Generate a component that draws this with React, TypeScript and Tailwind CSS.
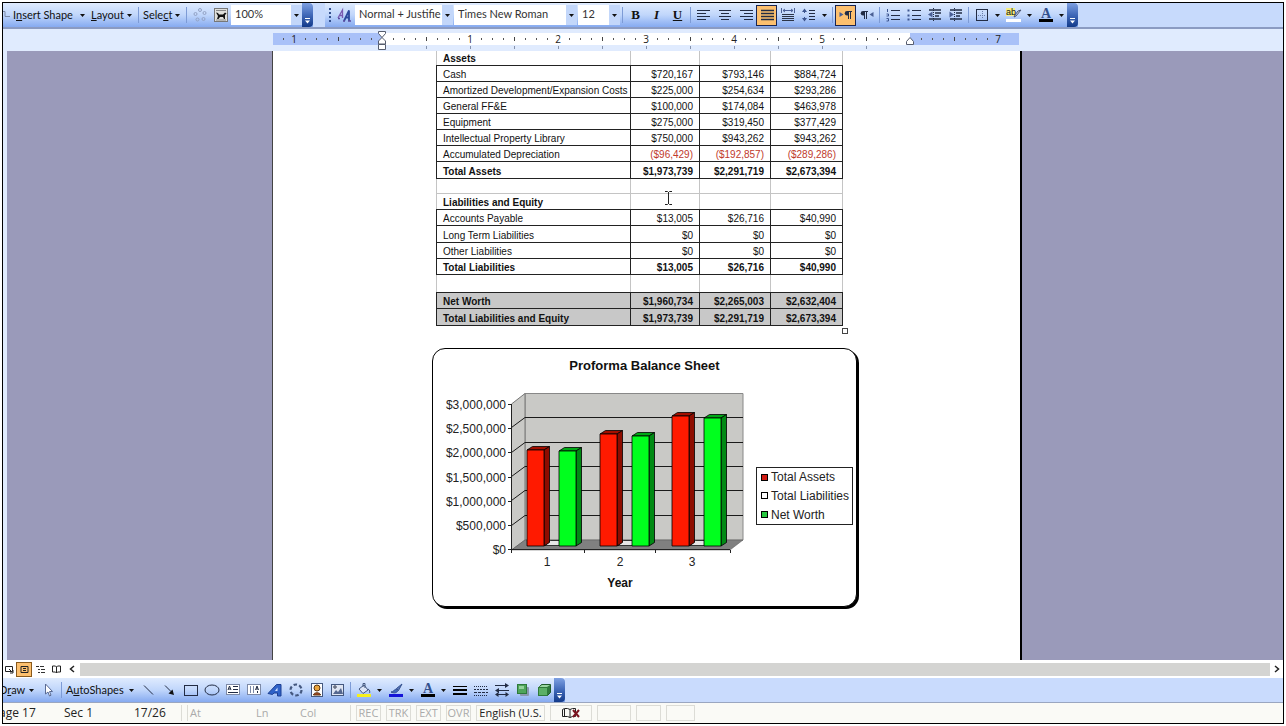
import { useState } from "react";
import type { ReactNode } from "react";

type Row = {
  label: string;
  values?: string[];
  kind?: "bold" | "open" | "shaded" | "negative";
  height: string;
};

const ROWS: Row[] = [
  { label: "Assets", kind: "open", height: "h-[14px]" },
  { label: "Cash", values: ["$720,167", "$793,146", "$884,724"], height: "h-[16px]" },
  { label: "Amortized Development/Expansion Costs", values: ["$225,000", "$254,634", "$293,286"], height: "h-[16px]" },
  { label: "General FF&E", values: ["$100,000", "$174,084", "$463,978"], height: "h-[16px]" },
  { label: "Equipment", values: ["$275,000", "$319,450", "$377,429"], height: "h-[16px]" },
  { label: "Intellectual Property Library", values: ["$750,000", "$943,262", "$943,262"], height: "h-[16px]" },
  { label: "Accumulated Depreciation", values: ["($96,429)", "($192,857)", "($289,286)"], kind: "negative", height: "h-[16px]" },
  { label: "Total Assets", values: ["$1,973,739", "$2,291,719", "$2,673,394"], kind: "bold", height: "h-[17px]" },
  { label: "", kind: "open", height: "h-[15px]" },
  { label: "Liabilities and Equity", kind: "open", height: "h-[16px]" },
  { label: "Accounts Payable", values: ["$13,005", "$26,716", "$40,990"], height: "h-[16px]" },
  { label: "Long Term Liabilities", values: ["$0", "$0", "$0"], height: "h-[17px]" },
  { label: "Other Liabilities", values: ["$0", "$0", "$0"], height: "h-[16px]" },
  { label: "Total Liabilities", values: ["$13,005", "$26,716", "$40,990"], kind: "bold", height: "h-[16px]" },
  { label: "", kind: "open", height: "h-[18px]" },
  { label: "Net Worth", values: ["$1,960,734", "$2,265,003", "$2,632,404"], kind: "shaded", height: "h-[16px]" },
  { label: "Total Liabilities and Equity", values: ["$1,973,739", "$2,291,719", "$2,673,394"], kind: "shaded", height: "h-[17px]" },
];

const YEARS = [
  { year: "1", assets: 1973739, netWorth: 1960734 },
  { year: "2", assets: 2291719, netWorth: 2265003 },
  { year: "3", assets: 2673394, netWorth: 2632404 },
];

const AXIS_LABELS = ["$3,000,000", "$2,500,000", "$2,000,000", "$1,500,000", "$1,000,000", "$500,000", "$0"];

const Icon = ({ children }: { children: ReactNode }) => (
  <svg width="16" height="16" viewBox="0 0 16 16" fill="none" stroke="#222c44" className="shrink-0">
    {children}
  </svg>
);

const IconButton = ({ label, active, children }: { label: string; active?: boolean; children: ReactNode }) => (
  <button
    type="button"
    aria-label={label}
    aria-pressed={active}
    className={`flex h-[21px] w-[21px] shrink-0 items-center justify-center ${
      active ? "border border-[#1a2550] bg-[#fdc06e]" : ""
    }`}
  >
    <Icon>{children}</Icon>
  </button>
);

const Triangle = () => (
  <svg width="5" height="3" viewBox="0 0 5 3" className="shrink-0">
    <path d="M0 0h5L2.5 3z" fill="#111" />
  </svg>
);

const ArrowButton = ({ label }: { label: string }) => (
  <button type="button" aria-label={label} className="flex h-[21px] w-[11px] shrink-0 items-center justify-center">
    <Triangle />
  </button>
);

const TextMenu = ({ width, children }: { width: string; children: ReactNode }) => (
  <button
    type="button"
    className={`flex h-[21px] shrink-0 items-center justify-between pr-1 pl-0.5 text-[11px] whitespace-nowrap ${width}`}
  >
    <span>{children}</span>
    <Triangle />
  </button>
);

const Separator = () => <div className="mx-0.5 h-4 w-px shrink-0 bg-[#7d9bd6]" />;

const EndCap = ({ label }: { label: string }) => (
  <button
    type="button"
    aria-label={label}
    className="flex h-full w-[11px] shrink-0 items-end justify-center rounded-r-sm bg-gradient-to-b from-[#7ea0e2] via-[#4068b8] to-[#123a8a] pb-0.5"
  >
    <svg width="7" height="7" viewBox="0 0 7 7">
      <path d="M1 .5h5" stroke="#fff" />
      <path d="M1 2.500h5L3.500 5.500z" fill="#fff" />
    </svg>
  </button>
);

const Combo = ({
  label,
  options,
  width,
}: {
  label: string;
  options: string[];
  width: string;
}) => {
  const [value, setValue] = useState(options[0]);
  return (
    <label className={`relative flex h-[20px] shrink-0 bg-white ${width}`}>
      <select
        aria-label={label}
        value={value}
        onChange={(e) => setValue(e.target.value)}
        className="w-full appearance-none overflow-hidden pr-3 pb-0.5 pl-1 text-[11px] text-[#333] outline-none"
      >
        {options.map((o) => (
          <option key={o}>{o}</option>
        ))}
      </select>
      <span className="pointer-events-none absolute inset-y-0 right-0 flex w-[11px] items-center justify-center bg-[#c3d7fa]">
        <Triangle />
      </span>
    </label>
  );
};

const TOOLBAR =
  "flex h-[24px] shrink-0 items-center bg-gradient-to-b from-[#dfebfe] via-[#c0d6fb] to-[#86aaf0]";

const TopToolbars = () => (
  <header className="flex shrink-0 gap-3 overflow-hidden border-b-2 border-[#8b9bc2] bg-[#c7dafc]">
    <div className={TOOLBAR}>
      <svg width="8" height="16" viewBox="0 0 8 16" fill="none" stroke="#7c8aa8" className="shrink-0">
        <path d="M0 4.500h2v5h5" />
      </svg>
      <TextMenu width="w-[78px]">
        I<u>n</u>sert Shape
      </TextMenu>
      <TextMenu width="w-[47px]">
        <u>L</u>ayout
      </TextMenu>
      <Separator />
      <TextMenu width="w-[43px]">
        Sele<u>c</u>t
      </TextMenu>
      <Separator />
      <IconButton label="AutoFormat">
        <g stroke="#93a2c4">
          <circle cx="8" cy="3" r="1.500" />
          <circle cx="12.500" cy="6" r="1.500" />
          <circle cx="11.500" cy="12" r="1.500" />
          <circle cx="5.500" cy="12.500" r="1.500" />
          <circle cx="3.500" cy="7" r="1.500" />
        </g>
      </IconButton>
      <IconButton label="Text Wrapping">
        <rect x="1.500" y="1.500" width="13" height="13" fill="#e0e0dc" stroke="#777" />
        <path d="M3 3.500h10M3 13h10" stroke="#888" />
        <path d="M3 5.500l2 .5 1 1.500h4l2-2 1.500 1L12 8v4h-1l-1-2H7l-1.500 2H4l1-3z" fill="#111" stroke="none" />
      </IconButton>
      <Combo label="Zoom" options={["100%", "75%", "150%"]} width="w-[71px]" />
      <EndCap label="Toolbar Options" />
    </div>

    <div className={TOOLBAR}>
      <svg width="9" height="16" viewBox="0 0 9 16" className="shrink-0">
        <path d="M4 1h2v2H4zM4 5h2v2H4zM4 9h2v2H4zM4 13h2v2H4z" fill="#33508e" />
      </svg>
      <IconButton label="Styles and Formatting">
        <g strokeWidth="1.300">
          <path d="M1 11L5.500 3v8M2.500 8.500h3" stroke="#7a5ab0" />
          <path d="M7 14l5-10.500V14M8.500 10.500H12" stroke="#2c4a9c" strokeWidth="1.800" />
          <path d="M6 14h2M11 14h3M1 11.500h2" stroke="#5a4ba0" />
        </g>
      </IconButton>
      <div className="flex gap-px">
        <Combo label="Style" options={["Normal + Justifie", "Normal", "Heading 1"]} width="w-[98px]" />
        <Combo label="Font" options={["Times New Roman", "Arial"]} width="w-[123px]" />
        <Combo label="Font Size" options={["12", "10", "14"]} width="w-[42px]" />
      </div>
      <Separator />
      <button type="button" aria-label="Bold" className="w-[21px] font-['Liberation_Serif'] text-[13px] font-black">
        B
      </button>
      <button type="button" aria-label="Italic" className="w-[21px] font-['Liberation_Serif'] text-[13px] font-bold italic">
        I
      </button>
      <button type="button" aria-label="Underline" className="w-[21px] font-['Liberation_Serif'] text-[13px] font-bold underline">
        U
      </button>
      <Separator />
      <IconButton label="Align Left">
        <path d="M1 3.500h13M1 6.500h9M1 9.500h13M1 12.500h9" />
      </IconButton>
      <IconButton label="Center">
        <path d="M2 3.500h12M4 6.500h8M2 9.500h12M4 12.500h8" />
      </IconButton>
      <IconButton label="Align Right">
        <path d="M2 3.500h13M6 6.500h9M2 9.500h13M6 12.500h9" />
      </IconButton>
      <IconButton label="Justify" active>
        <path d="M2 3.500h13M2 6.500h13M2 9.500h13M2 12.500h13" strokeWidth="1.500" />
      </IconButton>
      <IconButton label="Distributed">
        <path d="M1.500 1v5M14.500 1v5M3 3.500h10M5 2L3 3.500 5 5M11 2l2 1.500L11 5" stroke="#4c6096" />
        <path d="M2 7.500h12M2 9.500h12M2 11.500h12M2 13.500h12" stroke="#2c3446" />
      </IconButton>
      <IconButton label="Line Spacing">
        <path d="M3.500 2v4M3.500 10v4" stroke="#3e5690" />
        <path d="M1 5l2.500-3.500L6 5zM1 11l2.500 3.500L6 11z" fill="#3e5690" stroke="none" />
        <path d="M8 3.500h6M8 6.500h6M8 9.500h6M8 12.500h6" />
      </IconButton>
      <ArrowButton label="Line Spacing options" />
      <Separator />
      <IconButton label="Left-to-Right" active>
        <path d="M1.500 5v5l4-2.500z" fill="#4a5f94" stroke="none" />
        <path d="M10.500 4v8M12.500 4v8M9 4.500h5" />
        <path d="M10 4H9a2 2 0 000 4.500h1z" fill="#222c44" stroke="none" />
      </IconButton>
      <IconButton label="Right-to-Left">
        <path d="M14.500 5v5l-4-2.500z" fill="#4a5f94" stroke="none" />
        <path d="M5.500 4v8M7.500 4v8M4 4.500h5" />
        <path d="M5 4H4a2 2 0 000 4.500h1z" fill="#222c44" stroke="none" />
      </IconButton>
      <Separator />
      <IconButton label="Numbering">
        <path d="M2.500 2v3M1.500 7h2v2h-2M1.500 11.500h2v2.500h-2" stroke="#3e5690" />
        <path d="M6 3.500h9M6 8.500h9M6 12.500h9" />
      </IconButton>
      <IconButton label="Bullets">
        <path d="M1.500 2.500h2v2h-2zM1.500 7.500h2v2h-2zM1.500 11.500h2v2h-2z" fill="#3e5690" stroke="none" />
        <path d="M6 3.500h9M6 8.500h9M6 12.500h9" />
      </IconButton>
      <IconButton label="Decrease Indent">
        <path d="M6.500 1v14" strokeDasharray="1 1" />
        <path d="M5.500 4.500L1 7.500l4.500 3z" fill="#4a5f94" stroke="none" />
        <path d="M2 3h12M8 6h6M8 9h4M2 12h12" strokeWidth="1.500" />
      </IconButton>
      <IconButton label="Increase Indent">
        <path d="M6.500 1v14" strokeDasharray="1 1" />
        <path d="M1.500 4.500L6 7.500l-4.500 3z" fill="#4a5f94" stroke="none" />
        <path d="M2 3h12M8 6h6M8 9h4M2 12h12" strokeWidth="1.500" />
      </IconButton>
      <Separator />
      <IconButton label="Outside Border">
        <rect x="2.500" y="2.500" width="11" height="11" />
        <path d="M8.500 4v8M4 8.500h8" strokeDasharray="1 1" stroke="#6a7daa" />
      </IconButton>
      <ArrowButton label="Border options" />
      <IconButton label="Highlight">
        <rect x="0" y="1" width="9" height="8" fill="#f5ef84" stroke="none" />
        <text x="0" y="8" fontSize="9" fontFamily="Liberation Sans" fill="#111" stroke="none">
          ab
        </text>
        <path d="M15 3l-5 6-2 1 1-2 3-4z" fill="#cdd6ea" stroke="#4a5470" />
        <rect x="0" y="12" width="15" height="3" fill="#fff" stroke="none" />
      </IconButton>
      <ArrowButton label="Highlight options" />
      <IconButton label="Font Color">
        <text x="3" y="11" fontSize="14" fontFamily="Liberation Serif" fontWeight="bold" fill="#33508e" stroke="none">
          A
        </text>
        <rect x="1" y="12" width="14" height="3" fill="#000" stroke="none" />
      </IconButton>
      <ArrowButton label="Font Color options" />
      <EndCap label="Formatting Options" />
    </div>
  </header>
);

// 88px to the inch, a tick every eighth; the left margin stands at 110
const ZERO = 110;

const Ruler = () => {
  const ticks = Array.from({ length: 67 }, (_, i) => i - 9);
  return (
    <div className="flex h-[22px] shrink-0 justify-center overflow-hidden bg-[#e0ebfe] pl-2">
      <svg width="750" height="22" viewBox="0 0 750 22" className="shrink-0">
        <rect x="1" y="4" width="746" height="12" fill="#a9c1f8" />
        <rect x={ZERO} y="4" width="528" height="12" fill="#fff" />
        {ticks.map((t) => {
          const x = ZERO + t * 11;
          if (t % 8 === 0) {
            const inch = Math.abs(t / 8);
            if (inch === 0 || inch === 6) return null;
            return (
              <text key={t} x={x} y="14" textAnchor="middle" fontSize="10" fontFamily="Open Sans" fill="#222">
                {inch}
              </text>
            );
          }
          if (x > 735) return null;
          return t % 4 === 0 ? (
            <rect key={t} x={x} y="8" width="1" height="4" fill="#444" />
          ) : (
            <rect key={t} x={x} y="9" width="1" height="2" fill="#555" />
          );
        })}
        {Array.from({ length: 11 }, (_, i) => (
          <rect key={i} x={ZERO + 44 * (i + 1)} y="17" width="1" height="3" fill="#8592ac" />
        ))}
        <g fill="#fff" stroke="#555c6e">
          <path d="M106.500 2.500h7v2l-3.500 4-3.500-4zM110 8.500l3.500 3.500v3h-7v-3zM106.500 15.500h7v5h-7z" />
          <path d="M638 8.500l3.500 4v3h-7v-3z" />
        </g>
      </svg>
    </div>
  );
};

const BalanceTable = () => (
  <table aria-label="Balance sheet" className="w-[407px] table-fixed border-collapse text-[10px] leading-3">
    <colgroup>
      <col className="w-[194px]" />
      <col className="w-[69px]" />
      <col className="w-[71px]" />
      <col className="w-[72px]" />
    </colgroup>
    <tbody>
      {ROWS.map((row, i) => {
        const open = row.kind === "open";
        const heavy = row.kind && row.kind !== "negative";
        const nextOpen = ROWS[i + 1]?.kind === "open";
        const side = open ? "border-x-[#c4c4c4]" : "border-x-[#222]";
        const bottom = open && nextOpen ? "border-b-[#c4c4c4]" : "border-b-[#222]";
        const cell = `border-x border-b p-0 align-bottom ${side} ${bottom}`;
        return (
          <tr key={i} className={`${row.height} ${row.kind === "shaded" ? "bg-[#c8c8c8]" : ""}`}>
            <th
              scope="row"
              className={`${cell} pl-1.5 text-left whitespace-nowrap ${heavy ? "font-bold" : "font-normal"}`}
            >
              {row.label}
            </th>
            {[0, 1, 2].map((c) => (
              <td
                key={c}
                className={`${cell} pr-1.5 text-right ${heavy ? "font-bold" : ""} ${
                  row.kind === "negative" ? "text-[#c0392b]" : ""
                }`}
              >
                {row.values?.[c]}
              </td>
            ))}
          </tr>
        );
      })}
    </tbody>
  </table>
);

const Bar = ({ x, value, front, top, side }: { x: number; value: number; front: string; top: string; side: string }) => {
  const y = Math.round(172 - (value / 3000000) * 146);
  return (
    <g stroke="#000" strokeWidth="0.800" strokeLinejoin="round">
      <path d={`M${x} ${y}l5.500-3.500h17l-5.500 3.500z`} fill={top} />
      <path d={`M${x + 17} ${y}l5.500-3.500V168.500l-5.500 3.500z`} fill={side} />
      <path d={`M${x} ${y}h17V172h-17z`} fill={front} />
    </g>
  );
};

const Chart = () => (
  <svg
    width="323"
    height="225"
    viewBox="0 0 323 225"
    role="img"
    aria-label="Proforma Balance Sheet by year"
    className="shrink-0"
    fontFamily="Liberation Sans"
    fontSize="12"
  >
    <path d="M92 19.500h218V166H92z" fill="#c9c9c6" stroke="#888" />
    <path d="M78.500 30L92 19.500V166l-13.500 10z" fill="#c9c9c6" stroke="#777" />
    <path d="M78.500 176L92 166h218l-13 10z" fill="#808080" stroke="#555" strokeWidth="0.500" />
    {[1, 2, 3, 4, 5].map((i) => {
      const back = Math.round(19 + 24.3 * i) + 0.5;
      return <path key={i} d={`M78.500 ${back + 10}L92 ${back}h218`} fill="none" stroke="#1a1a1a" />;
    })}
    {AXIS_LABELS.map((label, i) => {
      const y = Math.round(30 + 24.2 * i) + 0.5;
      return (
        <g key={label}>
          <path d={`M75 ${y}h4`} stroke="#222" />
          <text x="73" y={y + 4} textAnchor="end" fill="#222">
            {label}
          </text>
        </g>
      );
    })}
    <path d="M78.500 30v149M78 175.500h219M151.500 176v3M222.500 176v3M297.500 176v3" stroke="#222" fill="none" />
    {YEARS.map(({ year, assets, netWorth }, i) => {
      const x = 94 + Math.round(72.5 * i);
      return (
        <g key={year}>
          <path d={`M${x + 18} 171.500l5.500-5h14l-5.500 5z`} fill="#e6e6e6" stroke="#111" strokeWidth="0.800" />
          <Bar x={x} value={assets} front="#ff1a00" top="#a30f00" side="#8e0c00" />
          <Bar x={x + 32} value={netWorth} front="#00ff1e" top="#00a816" side="#008a14" />
          <text x={x + 20} y="192" textAnchor="middle" fill="#222">
            {year}
          </text>
        </g>
      );
    })}
    <text x="187" y="213" textAnchor="middle" fontWeight="bold" fill="#111">
      Year
    </text>
  </svg>
);

const LegendItem = ({ swatch, children }: { swatch: string; children: ReactNode }) => (
  <li className="flex items-center gap-[3px] whitespace-nowrap">
    <span className={`h-[7px] w-[7px] border border-black ${swatch}`} />
    {children}
  </li>
);

const ChartCard = () => (
  <section className="mt-[22px] w-[425px] rounded-[13px] border border-black bg-white pt-[9px] pb-[7px] shadow-[2px_2px_0_#000]">
    <h2 className="text-center text-[13px] leading-4 font-bold text-[#111]">Proforma Balance Sheet</h2>
    <div className="flex items-center">
      <Chart />
      <ul className="mt-5 flex h-[58px] w-[97px] shrink-0 flex-col justify-around border border-[#222] pl-1 text-[12px] leading-4 text-[#222]">
        <LegendItem swatch="bg-[#d01c14]">Total Assets</LegendItem>
        <LegendItem swatch="bg-white">Total Liabilities</LegendItem>
        <LegendItem swatch="bg-[#28c840]">Net Worth</LegendItem>
      </ul>
    </div>
  </section>
);

const Workspace = () => (
  <main className="flex min-h-0 flex-1 justify-center overflow-hidden border-l-4 border-[#e0ebfe] bg-[#9a9aba] pl-1">
    <article className="w-[750px] shrink-0 border-r-2 border-l border-r-black border-l-[#444] bg-white pl-[159px] font-['Liberation_Sans',sans-serif] text-[#111]">
      <div className="relative ml-1 w-[407px]">
        <BalanceTable />
        <svg width="9" height="14" viewBox="0 0 9 14" className="absolute top-[140px] left-[228px]" fill="none" stroke="#222">
          <path d="M1 .5h2.500l1 1 1-1H8M4.500 1v12M1 13.500h2.500l1-1 1 1H8" />
        </svg>
        <span className="absolute -right-[5px] -bottom-2 h-1.5 w-1.5 border border-[#444] bg-white" />
      </div>
      <ChartCard />
    </article>
  </main>
);

const ViewBar = () => {
  const box = "flex h-[15px] shrink-0 items-center justify-center";
  return (
    <div className="flex h-[18px] shrink-0 items-center bg-white">
      <button type="button" aria-label="Normal View" className={`${box} w-[13px]`}>
        <svg width="9" height="9" viewBox="0 0 9 9" fill="none" stroke="#222">
          <path d="M.5 1.500h7v5h-7zM4 4l3 3M8 5v3H5" />
        </svg>
      </button>
      <button
        type="button"
        aria-label="Print Layout View"
        aria-pressed
        className={`${box} w-4 border border-[#8a5a1c] bg-[#fdc06e]`}
      >
        <svg width="9" height="9" viewBox="0 0 9 9" fill="none" stroke="#222">
          <path d="M1 1.500h7v6H1zM3 3.500h3M3 5.500h3" />
        </svg>
      </button>
      <button type="button" aria-label="Outline View" className={`${box} w-4`}>
        <svg width="9" height="9" viewBox="0 0 9 9" fill="none" stroke="#333">
          <path d="M0 1.500h3M2 4.500h2M2 7.500h2M4 1.500h4M5 4.500h4M5 7.500h4" />
        </svg>
      </button>
      <button type="button" aria-label="Reading Layout" className={`${box} w-4`}>
        <svg width="9" height="9" viewBox="0 0 9 9" fill="none" stroke="#222">
          <path d="M.5 1h3l1 1 1-1h3v6h-3l-1 1-1-1h-3zM4.500 2v6" />
        </svg>
      </button>
      <button type="button" aria-label="Scroll left" className={`${box} w-4`}>
        <svg width="6" height="8" viewBox="0 0 6 8" fill="none" stroke="#222" strokeWidth="1.500">
          <path d="M5 1L1.500 4 5 7" />
        </svg>
      </button>
      <div className="h-[13px] flex-1 bg-[#d4d4d2]" />
      <button type="button" aria-label="Scroll right" className={`${box} w-[13px]`}>
        <svg width="6" height="8" viewBox="0 0 6 8" fill="none" stroke="#222" strokeWidth="1.500">
          <path d="M1 1l3.500 3L1 7" />
        </svg>
      </button>
    </div>
  );
};

const DrawingToolbar = () => (
  <div className="shrink-0 overflow-hidden border-b border-[#9aa6c0] bg-[#c9dbfd]">
    <div className={`${TOOLBAR} w-fit`}>
      <button type="button" className="-ml-1 flex h-[21px] w-[39px] shrink-0 items-center justify-between pr-1 text-[11px]">
        <span>
          D<u>r</u>aw
        </span>
        <Triangle />
      </button>
      <IconButton label="Select Objects">
        <path d="M4.500 2v10l2.500-2 1.500 4 1.500-.8-1.500-3.700h3z" fill="#fff" stroke="#5a6b94" />
      </IconButton>
      <Separator />
      <TextMenu width="w-[74px]">
        A<u>u</u>toShapes
      </TextMenu>
      <IconButton label="Line">
        <path d="M3 3.500l9 9" />
      </IconButton>
      <IconButton label="Arrow">
        <path d="M3 3.500l6 6" />
        <path d="M12 13l-1.500-5.500-4 4z" fill="#111" stroke="none" />
      </IconButton>
      <IconButton label="Rectangle">
        <rect x="1.500" y="3.500" width="13" height="10" />
      </IconButton>
      <IconButton label="Oval">
        <ellipse cx="8" cy="8" rx="7" ry="5" />
      </IconButton>
      <IconButton label="Text Box">
        <rect x="1.500" y="2.500" width="13" height="10" fill="#fff" stroke="#7c89a6" />
        <path d="M3 8l1.500-4L6 8M3.500 7h2M8 4.500h5M8 7.500h5M3 10.500h10" />
      </IconButton>
      <IconButton label="Vertical Text Box">
        <rect x="1.500" y="2.500" width="13" height="10" fill="#fff" stroke="#7c89a6" />
        <path d="M4.500 4v7M7.500 4v7" stroke="#7c89a6" />
        <path d="M9.500 8l1.500-4 1.500 4M10 7h2M11.500 9v2" />
      </IconButton>
      <IconButton label="WordArt">
        <path d="M1 11.500L9.500 2.500H14V14h-3.500v-3H7L5.500 12.500z" fill="#2f62c8" stroke="#1c3f92" />
        <path d="M8 9l2.500-3.500V9z" fill="#cfe0ff" stroke="none" />
      </IconButton>
      <IconButton label="Diagram">
        <circle cx="8" cy="8" r="5.500" stroke="#44587f" strokeDasharray="3.500 2.200" strokeWidth="2.200" />
      </IconButton>
      <IconButton label="Clip Art">
        <rect x="2.500" y="1.500" width="11" height="13" fill="#fff" stroke="#44587f" />
        <circle cx="8" cy="6" r="3" fill="#e9a43c" stroke="#5a3410" />
        <path d="M4.500 13c0-3 7-3 7 0z" fill="#b04a24" stroke="#5a3410" />
      </IconButton>
      <IconButton label="Picture">
        <rect x="1.500" y="2.500" width="12" height="11" fill="#dfe5f2" stroke="#44587f" />
        <path d="M3 12l3-4 2 2 3-4 2 6z" fill="#55678f" stroke="none" />
        <circle cx="5" cy="5" r="1.200" fill="#fff" />
      </IconButton>
      <Separator />
      <IconButton label="Fill Color">
        <path d="M3 7l5-4 4 5-5 3.500z" fill="#dbe4f6" stroke="#44587f" />
        <path d="M7 5V1.500h2V6M12 7c2 1 2 3 1.500 4" stroke="#44587f" />
        <rect x="1" y="12" width="14" height="3" fill="#f6f01c" stroke="none" />
      </IconButton>
      <ArrowButton label="Fill Color options" />
      <IconButton label="Line Color">
        <path d="M14 2L8.500 6.500l2 2z" fill="#5a76b8" stroke="#33508e" />
        <path d="M9 7c-3 0-3 3-6 3 3 1.500 6 1 7-1.500z" fill="#4067c0" stroke="#33508e" />
        <rect x="1" y="12" width="14" height="3" fill="#1414d8" stroke="none" />
      </IconButton>
      <ArrowButton label="Line Color options" />
      <IconButton label="Font Color">
        <text x="3" y="11" fontSize="14" fontFamily="Liberation Serif" fontWeight="bold" fill="#33508e" stroke="none">
          A
        </text>
        <rect x="1" y="12" width="14" height="3" fill="#000" stroke="none" />
      </IconButton>
      <ArrowButton label="Font Color options" />
      <IconButton label="Line Style">
        <path d="M1 4.500h14" stroke="#000" />
        <path d="M1 8h14" stroke="#000" strokeWidth="2" />
        <path d="M1 12h14" stroke="#000" strokeWidth="2" />
      </IconButton>
      <IconButton label="Dash Style">
        <path d="M1 4.500h14" strokeDasharray="1 1" />
        <path d="M1 7.500h14" strokeDasharray="2 1" />
        <path d="M1 10.500h14" strokeDasharray="3 1" />
        <path d="M1 13.500h14" strokeDasharray="1 1" />
      </IconButton>
      <IconButton label="Arrow Style">
        <path d="M1 3.500h12M3 8.500h12M3 12.500h10" />
        <path d="M11 1l4 2.500L11 6zM5 6L1 8.500 5 11zM11.500 10l3.500 2.500-3.500 2.500zM4.500 10L1 12.500 4.500 15z" fill="#222c44" stroke="none" />
      </IconButton>
      <IconButton label="Shadow Style">
        <rect x="5" y="5" width="9" height="9" rx="1" fill="#8a97ae" stroke="none" />
        <rect x="2.500" y="2.500" width="9" height="9" fill="#4fa55a" stroke="#2e7a3a" />
        <path d="M4 4h5v3H4z" fill="#93d29a" stroke="none" />
      </IconButton>
      <IconButton label="3-D Style">
        <path d="M2.500 5.500l3-3h9v8l-3 3h-9z" fill="#2e7a3a" stroke="#1f5c2a" />
        <path d="M2.500 5.500h9v8h-9z" fill="#5cb066" stroke="#2e7a3a" />
        <path d="M3 5l3-2h8l-3 2z" fill="#9ad6a0" stroke="none" />
      </IconButton>
      <EndCap label="Drawing Options" />
    </div>
  </div>
);

const StatusBox = ({ width, children }: { width: string; children?: ReactNode }) => (
  <div className={`flex h-4 shrink-0 items-center justify-center border border-[#dcdcd6] ${width}`}>{children}</div>
);

const StatusBar = () => (
  <footer className="flex h-[20px] shrink-0 items-center gap-[5px] overflow-hidden bg-[#fafaf6] font-['Open_Sans',sans-serif] text-[11px] whitespace-nowrap text-[#222]">
    <div className="flex h-4 w-[179px] shrink-0 items-center border-r border-[#dcdcd6] text-[12px]">
      <span className="-ml-1 w-[65px]">age 17</span>
      <span className="w-[70px]">Sec 1</span>
      <span>17/26</span>
    </div>
    <div className="flex h-4 w-[164px] shrink-0 items-center border-x border-[#dcdcd6] pl-0.5 text-[#aaa]">
      <span className="w-[66px]">At</span>
      <span className="w-[44px]">Ln</span>
      <span>Col</span>
    </div>
    <div className="flex gap-[5px] text-[#aaa]">
      <StatusBox width="w-[25px]">REC</StatusBox>
      <StatusBox width="w-[25px]">TRK</StatusBox>
      <StatusBox width="w-[25px]">EXT</StatusBox>
      <StatusBox width="w-[25px]">OVR</StatusBox>
    </div>
    <StatusBox width="w-[69px]">English (U.S.</StatusBox>
    <StatusBox width="w-[42px]">
      <svg width="20" height="12" viewBox="0 0 20 12" fill="none" stroke="#222">
        <path d="M1.500 2.500l2-1h3l2.500 1 2.500-1h3v8h-3L9 10.500l-2.500-1h-5zM3.500 2v7M9 2.500v8" />
        <path d="M12 3l6 7M18 3l-6 7" stroke="#7c1420" strokeWidth="2" />
      </svg>
    </StatusBox>
    <StatusBox width="w-[34px]" />
    <StatusBox width="w-[25px]" />
    <StatusBox width="w-[29px]" />
  </footer>
);

const App = () => (
  <div className="h-screen bg-white p-0.5">
    <div className="flex h-full flex-col overflow-hidden border border-black font-['Lato',sans-serif] text-[#111]">
      <TopToolbars />
      <Ruler />
      <Workspace />
      <ViewBar />
      <DrawingToolbar />
      <StatusBar />
    </div>
  </div>
);

export default App;
